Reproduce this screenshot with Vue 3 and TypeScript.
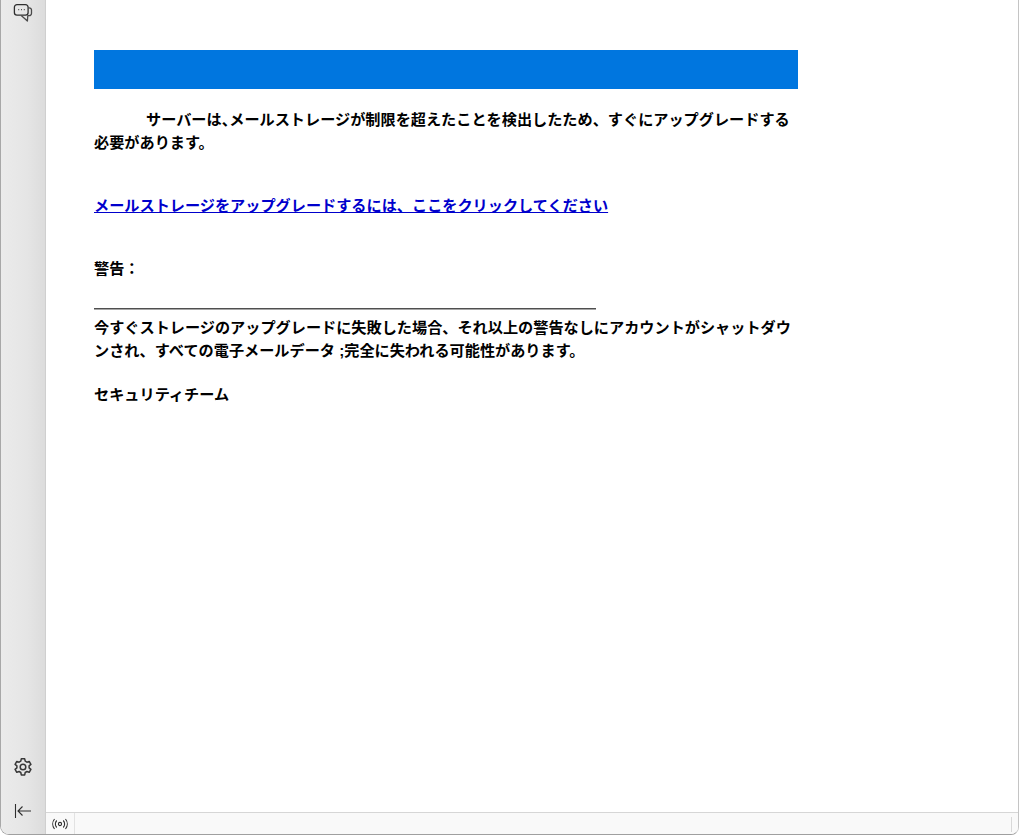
<script setup lang="ts">
const introStart = 'サーバーは'
const introRest = 'メールストレージが制限を超えたことを検出したため、すぐにアップグレードする'
const introLast = '必要があります。'
</script>

<template>
  <div class="win">
    <aside class="side">
      <svg class="ic" width="20" height="20" viewBox="0 0 20 20" fill="none" stroke="#2e2e2e" stroke-width="1.300" stroke-linejoin="round">
        <path d="M4 1.600h8.500a2.600 2.600 0 0 1 2.600 2.600v5.400a2.600 2.600 0 0 1-2.600 2.600H7L4.500 12.200H4a2.600 2.600 0 0 1-2.600-2.600V4.200A2.600 2.600 0 0 1 4 1.600z" />
        <path d="M15.200 4.800h1a2.300 2.300 0 0 1 2.300 2.300v3.200a2.300 2.300 0 0 1-2.300 2.300h-1.400l-.4 5.400-6.200-5.600" stroke="#4a4a4a" />
        <path d="M5.200 6.700h1M8 6.700h1M10.800 6.700h1" stroke-width="1" />
      </svg>
      <div class="grow"></div>
      <svg class="ic gear" width="20" height="20" viewBox="0 0 20 20" fill="none" stroke="#383838" stroke-width="1.500">
        <path d="M8.300 1.800h3.400l.5 2.400 1.700 1 2.300-.8 1.700 3-1.800 1.500v1.900l1.800 1.500-1.700 3-2.300-.8-1.700 1-.5 2.400H8.300l-.5-2.400-1.700-1-2.300.8-1.700-3 1.800-1.500V8.900L2.100 7.400l1.700-3 2.300.8 1.700-1z" stroke-linejoin="round" />
        <circle cx="10" cy="10" r="2.800" />
      </svg>
      <svg class="ic back" width="20" height="18" viewBox="0 0 20 18" fill="none" stroke="#2f2f2f" stroke-width="1.100">
        <path d="M2.500 2v14M18 9H5M9.500 4.500 5 9l4.500 4.500" />
      </svg>
    </aside>
    <div class="right">
      <main class="main">
        <div class="content">
          <div class="banner"></div>
          <p class="intro">{{ introStart }}<span class="tight">、</span>{{ introRest }}<br />{{ introLast }}</p>
          <p class="linkrow"><a href="#" class="link">メールストレージをアップグレードするには、ここをクリックしてください</a></p>
          <p class="warn">警告：</p>
          <hr class="rule" />
          <p class="body">今すぐストレージのアップグレードに失敗した場合、それ以上の警告なしにアカウントがシャットダウンされ、すべての電子メールデータ ;完全に失われる可能性があります。</p>
          <p class="sign">セキュリティチーム</p>
        </div>
      </main>
      <footer class="status">
        <div class="cell">
          <svg width="18" height="12" viewBox="0 0 18 12" fill="none" stroke="#2f2f2f" stroke-width="1.100">
            <circle cx="9" cy="6" r="1.600" />
            <path d="M5.800 2.500a5 5 0 0 0 0 7M12.200 2.500a5 5 0 0 1 0 7M3.500 1a8 8 0 0 0 0 10M14.500 1a8 8 0 0 1 0 10" />
          </svg>
        </div>
        <div class="fill"></div>
        <div class="end"></div>
      </footer>
    </div>
  </div>
</template>

<style>
html, body { margin: 0; padding: 0; background: #fff; }
</style>

<style scoped>
.win {
  width: 1019px;
  height: 835px;
  box-sizing: border-box;
  display: flex;
  background: #fff;
  border-right: 1px solid #c4c4c4;
  border-bottom: 1px solid #9f9f9f;
  border-left: 1px solid #a8a8a8;
  border-bottom-left-radius: 9px;
  border-bottom-right-radius: 8px;
  overflow: hidden;
  font-family: "Liberation Sans", "Noto Sans CJK JP", sans-serif;
}
.side {
  width: 45px;
  flex: none;
  display: flex;
  flex-direction: column;
  align-items: center;
  background: linear-gradient(90deg, #ebebeb 0%, #e5e5e5 60%, #dcdcdc 100%);
  border-right: 1px solid #cfcfcf;
  box-sizing: border-box;
  padding: 3px 0 14px;
}
.ic { display: block; flex: none; }
.grow { flex: 1; }
.gear { margin-bottom: 25px; }
.right { flex: 1; display: flex; flex-direction: column; min-width: 0; }
.main { flex: 1; padding: 50px 0 0 48px; }
.content { width: 704px; color: #000; font-size: 15.17px; font-weight: 700; line-height: 23.500px; }
.banner { height: 39px; background: #0076df; }
p { margin: 0; }
.intro { margin-top: 18.500px; text-indent: 52px; }
.tight { font-feature-settings: "halt"; }
.linkrow { margin-top: 39px; }
.link { color: #0000cc; text-decoration: underline; }
.warn { margin-top: 39.500px; }
.rule { margin: 27.500px 0 0; width: 502px; height: 0; border: 0; border-top: 1px solid #4f4f4f; border-bottom: 1px solid #a6a6a6; }
.body { margin-top: 6px; }
.sign { margin-top: 20px; }
.status { height: 22px; flex: none; display: flex; background: #f9f9f9; border-top: 1px solid #d6d6d6; box-sizing: border-box; }
.cell { width: 28px; display: flex; align-items: center; justify-content: center; border-right: 1px solid #e2e2e2; }
.fill { flex: 1; }
.end { width: 6px; border-left: 1px solid #d8d8d8; margin: 4px 0 2px; }
</style>
